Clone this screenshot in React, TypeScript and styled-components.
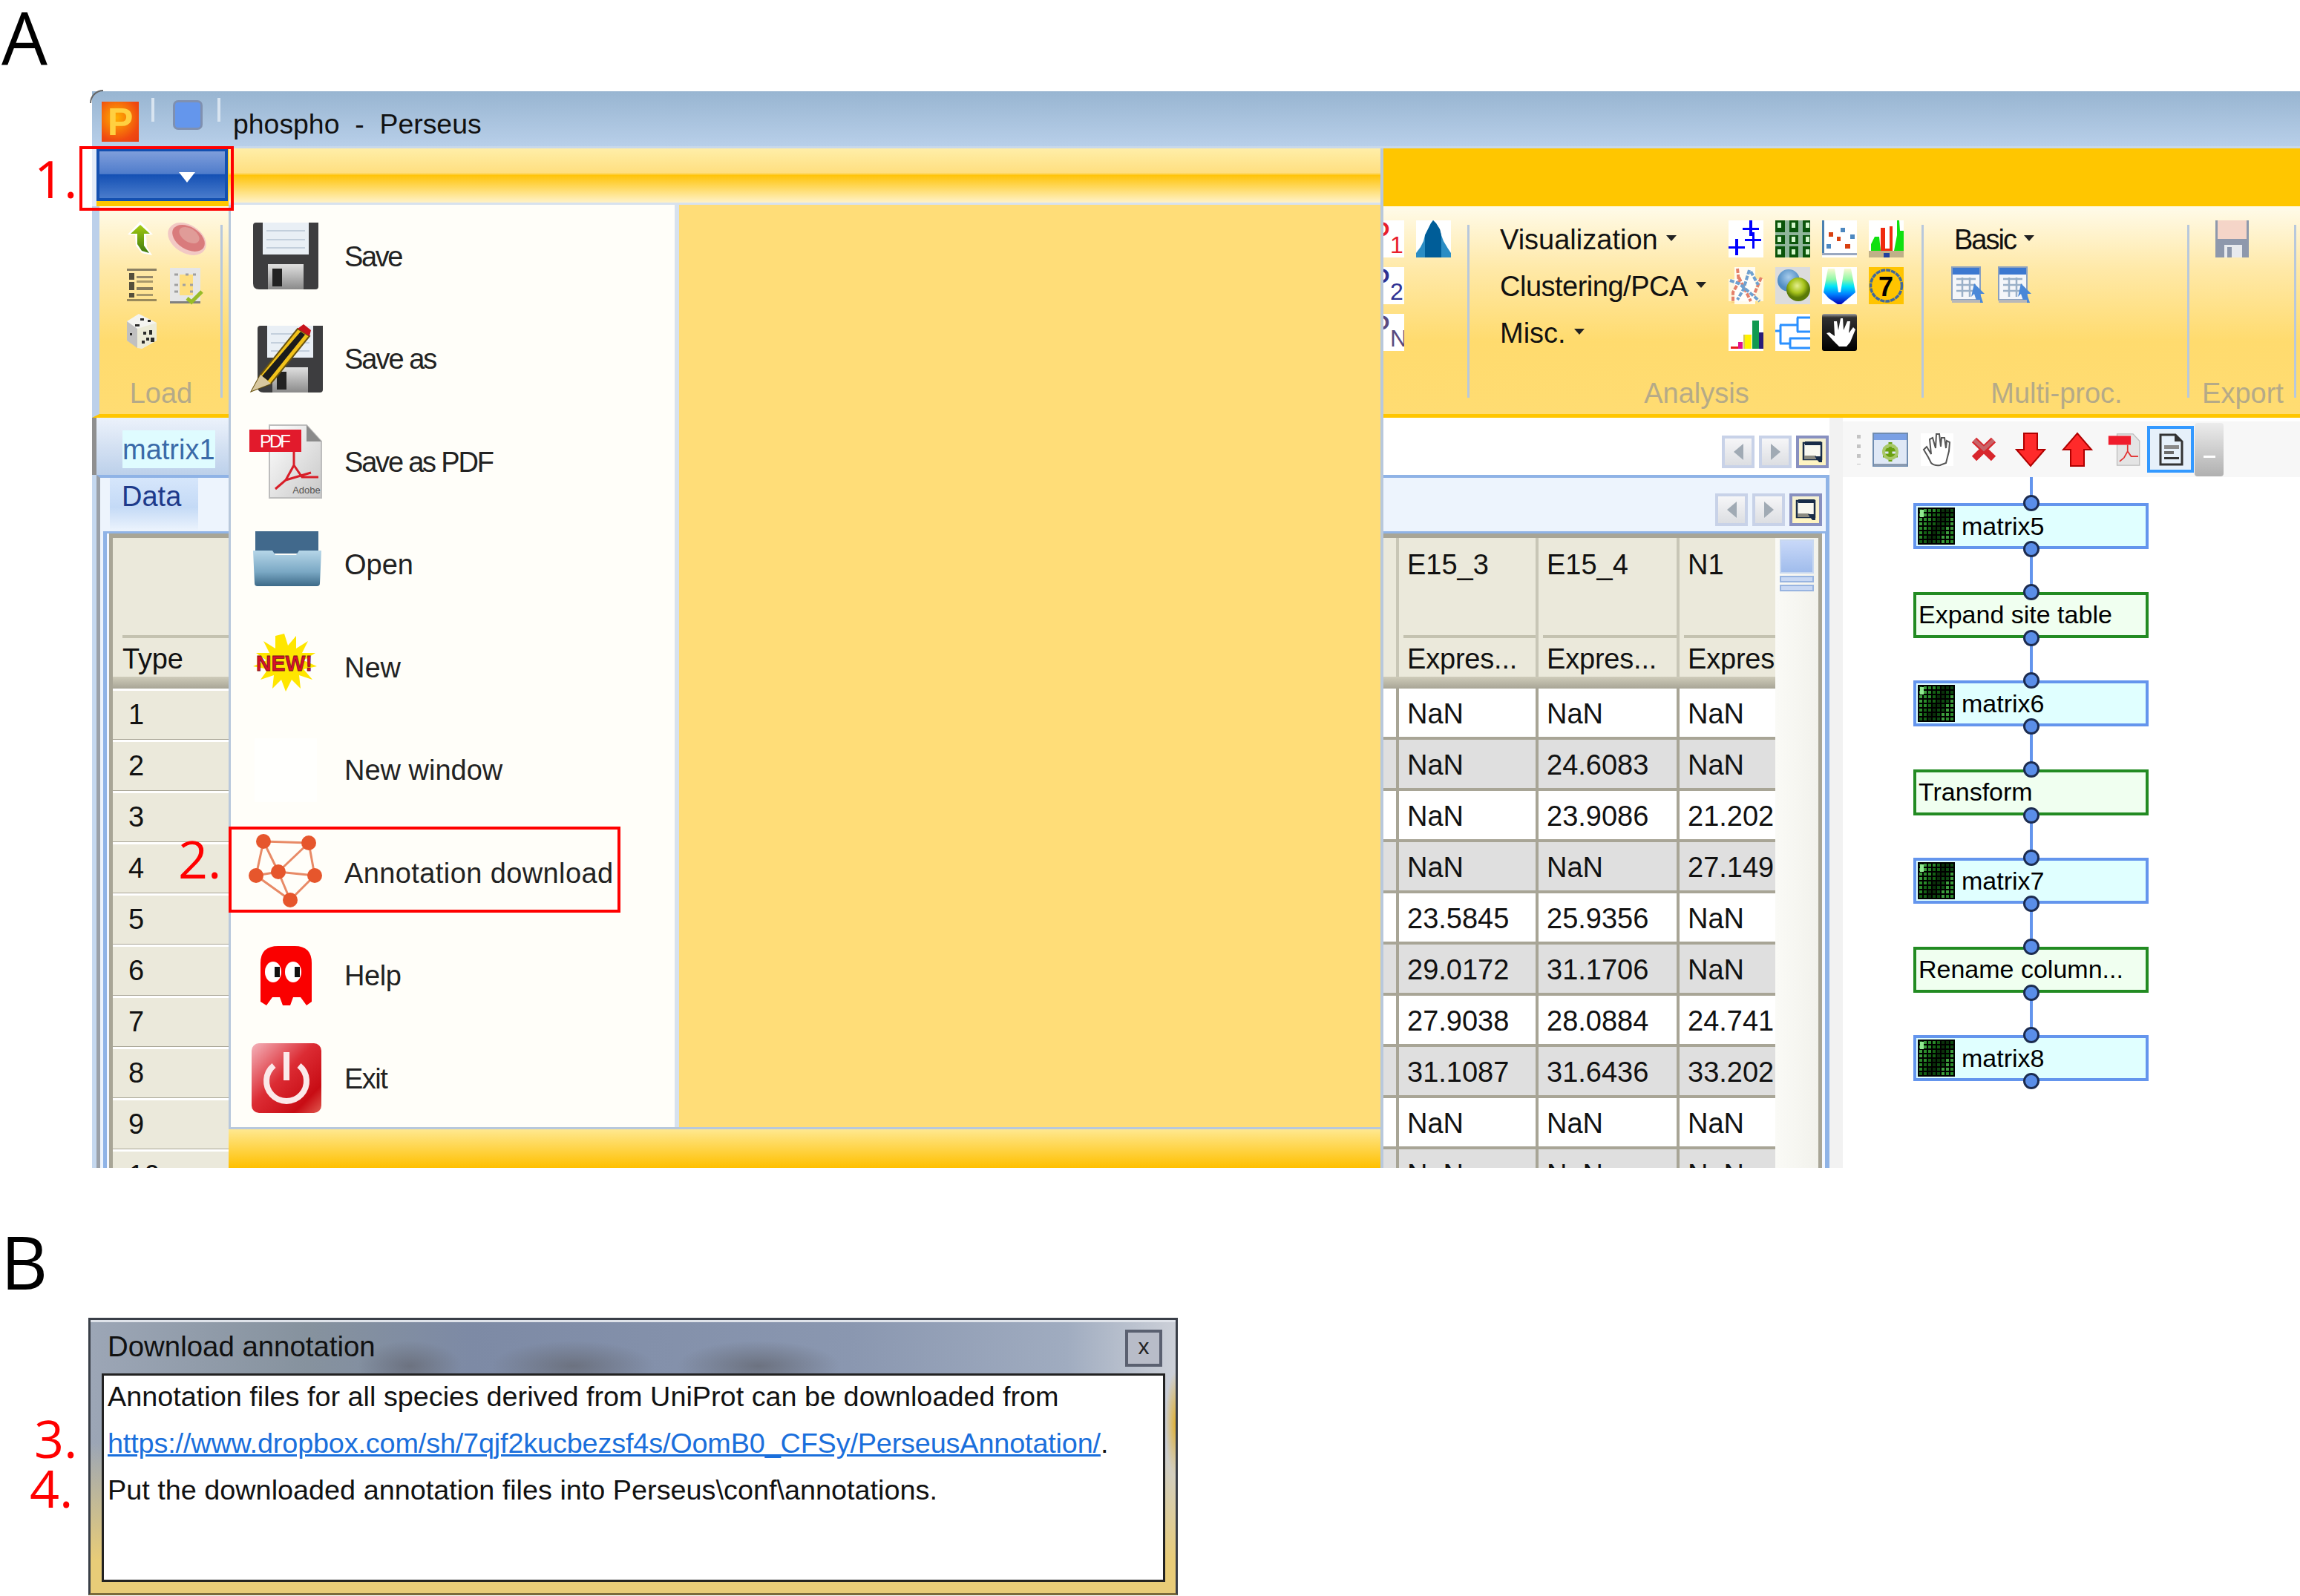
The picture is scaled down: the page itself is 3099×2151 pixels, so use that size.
//-----------------------------------------------------------------------------
// Imports
//-----------------------------------------------------------------------------
import React from 'react'
import styled, { createGlobalStyle } from 'styled-components'

//-----------------------------------------------------------------------------
// Data
//-----------------------------------------------------------------------------
const tableRows = [
  ['1', 'NaN', 'NaN', 'NaN'],
  ['2', 'NaN', '24.6083', 'NaN'],
  ['3', 'NaN', '23.9086', '21.202'],
  ['4', 'NaN', 'NaN', '27.149'],
  ['5', '23.5845', '25.9356', 'NaN'],
  ['6', '29.0172', '31.1706', 'NaN'],
  ['7', '27.9038', '28.0884', '24.741'],
  ['8', '31.1087', '31.6436', '33.202'],
  ['9', 'NaN', 'NaN', 'NaN'],
  ['10', 'NaN', 'NaN', 'NaN']
]

const workflow = [
  { label: 'matrix5', isMatrix: true },
  { label: 'Expand site table', isMatrix: false },
  { label: 'matrix6', isMatrix: true },
  { label: 'Transform', isMatrix: false },
  { label: 'matrix7', isMatrix: true },
  { label: 'Rename column...', isMatrix: false },
  { label: 'matrix8', isMatrix: true }
]

//-----------------------------------------------------------------------------
// Icons
//-----------------------------------------------------------------------------
const Ico = styled.svg<{ $w: number, $h: number }>`
  width: ${p => p.$w}px;
  height: ${p => p.$h}px;
  flex: none;
  display: block;
  overflow: visible;
`

const ClippedIco = styled(Ico)`
  overflow: hidden;
`

const BaseIcon = ({ w = 47, h = 50, children }: { w?: number, h?: number, children: React.ReactNode }) => (
  <Ico $w={w} $h={h} viewBox={`0 0 ${w} ${h}`}>{children}</Ico>
)

const MenuIcon = ({ children }: { children: React.ReactNode }) => (
  <Ico $w={88} $h={90} viewBox="0 0 88 90">{children}</Ico>
)

const FloppyShape = ({ id, dx = 0 }: { id: string, dx?: number }) => (
  <g transform={`translate(${dx} 0)`}>
    <defs>
      <linearGradient id={id} x1="0" y1="0" x2="0" y2="1">
        <stop offset="0" stopColor="#e0e0e0" />
        <stop offset="1" stopColor="#8a8a8a" />
      </linearGradient>
    </defs>
    <path d="M0 4 Q0 0 4 0 H88 V86 Q88 90 84 90 H8 Q0 90 0 82 Z" fill="#3d3d3f" />
    <rect x="13" y="0" width="62" height="43" fill="#e9eff5" />
    <rect x="18" y="10" width="52" height="2" fill="#c3cfdc" />
    <rect x="18" y="22" width="52" height="2" fill="#c3cfdc" />
    <rect x="18" y="33" width="52" height="2" fill="#c3cfdc" />
    <rect x="20" y="56" width="48" height="34" fill={`url(#${id})`} />
    <rect x="26" y="62" width="13" height="24" fill="#222" />
  </g>
)

const SaveIcon = () => <MenuIcon><FloppyShape id="saveGrad" /></MenuIcon>

const SaveAsIcon = () => (
  <MenuIcon>
    <FloppyShape id="saveAsGrad" dx={6} />
    <path d="M-2 88 L10 66 L60 4 L76 14 L24 78 Z" fill="#f2c21a" stroke="#6a5410" strokeWidth="2" />
    <path d="M12 68 L64 8 L70 12 L20 74 Z" fill="#1c1c1c" />
    <path d="M60 4 L68 -2 L78 6 L76 14 Z" fill="#c8141c" />
    <path d="M-2 88 L10 66 L24 78 Z" fill="#d8c8a0" />
  </MenuIcon>
)

const PdfIcon = () => (
  <MenuIcon>
    <defs>
      <linearGradient id="pdfPage" x1="0" y1="0" x2="1" y2="1">
        <stop offset="0" stopColor="#ffffff" />
        <stop offset="1" stopColor="#c8c8c8" />
      </linearGradient>
    </defs>
    <path d="M22 -4 H72 L92 18 V94 H22 Z" fill="url(#pdfPage)" stroke="#bdbdbd" strokeWidth="2" />
    <path d="M72 -4 V18 H92 Z" fill="#8a8a8a" />
    <rect x="-5" y="2" width="70" height="30" fill="#e21a2c" />
    <text x="30" y="26" fontFamily="Liberation Sans, sans-serif" fontSize="24" fill="#fff" textAnchor="middle" textLength="42">PDF</text>
    <path d="M55 32 V50 L44 70 L30 82 M55 50 L66 66 L88 66 M44 70 L78 60" fill="none" stroke="#d81e28" strokeWidth="3" />
    <text x="72" y="88" fontFamily="Liberation Sans, sans-serif" fontSize="13" fill="#555" textAnchor="middle">Adobe</text>
  </MenuIcon>
)

const OpenIcon = () => (
  <MenuIcon>
    <defs>
      <linearGradient id="openGrad" x1="0" y1="0" x2="0" y2="1">
        <stop offset="0" stopColor="#b6d6e8" />
        <stop offset="0.6" stopColor="#7aa8c4" />
        <stop offset="1" stopColor="#3d6a88" />
      </linearGradient>
    </defs>
    <rect x="3" y="0" width="85" height="30" fill="#41698c" />
    <path d="M0 26 H26 L30 32 H58 L62 26 H92 L90 70 Q90 74 86 74 H6 Q2 74 2 70 Z" fill="url(#openGrad)" />
  </MenuIcon>
)

const NewIcon = () => (
  <MenuIcon>
    <path d="M42 0 L47 16 L58 3 L58 20 L74 10 L66 26 L84 26 L68 36 L86 44 L68 48 L80 62 L62 56 L64 74 L52 62 L44 78 L38 62 L26 74 L28 56 L10 62 L20 48 L0 44 L18 36 L4 26 L22 26 L14 10 L30 20 L30 3 Z" fill="#ffe600" />
    <text x="42" y="50" fontFamily="Liberation Sans, sans-serif" fontWeight="700" fontSize="30" fill="#d8102a" stroke="#7a1020" strokeWidth="0.8" textAnchor="middle" textLength="76" lengthAdjust="spacingAndGlyphs">NEW!</text>
  </MenuIcon>
)

const BlankIcon = () => <MenuIcon><rect x="2" y="2" width="84" height="86" fill="#fffffd" /></MenuIcon>

const networkNodes = [[14, 3], [75, 5], [4, 49], [34, 44], [83, 49], [50, 82]]
const networkEdges = [[0, 1], [0, 2], [0, 3], [1, 3], [1, 4], [2, 3], [3, 4], [2, 5], [3, 5], [4, 5]]

const NetworkIcon = () => (
  <MenuIcon>
    {networkEdges.map(([a, b]) => (
      <line
        key={`${a}-${b}`}
        x1={networkNodes[a][0]}
        y1={networkNodes[a][1]}
        x2={networkNodes[b][0]}
        y2={networkNodes[b][1]}
        stroke="#e88a66"
        strokeWidth="3" />
    ))}
    {networkNodes.map(([x, y]) => <circle key={`${x}-${y}`} cx={x} cy={y} r="10" fill="#e6562c" />)}
  </MenuIcon>
)

const GhostIcon = () => (
  <MenuIcon>
    <path d="M10 80 V28 Q10 5 34 5 H56 Q79 5 79 28 V80 L72 85 L64 74 L54 74 L50 85 L40 85 L36 74 L26 74 L18 85 Z" fill="#fa0000" />
    <ellipse cx="27" cy="40" rx="11" ry="14" fill="#fff" />
    <ellipse cx="54" cy="40" rx="11" ry="14" fill="#fff" />
    <rect x="29" y="33" width="7" height="14" fill="#111" />
    <rect x="56" y="33" width="7" height="14" fill="#111" />
  </MenuIcon>
)

const ExitIcon = () => (
  <MenuIcon>
    <defs>
      <linearGradient id="exitGrad" x1="0" y1="0" x2="1" y2="1">
        <stop offset="0" stopColor="#f4b4bc" />
        <stop offset="0.45" stopColor="#dc2c34" />
        <stop offset="0.8" stopColor="#c80c14" />
        <stop offset="1" stopColor="#e05a50" />
      </linearGradient>
    </defs>
    <rect x="-2" y="-2" width="94" height="94" rx="10" fill="url(#exitGrad)" />
    <path d="M28 28 A27 27 0 1 0 62 28" fill="none" stroke="#fbe9ea" strokeWidth="8" />
    <rect x="41" y="10" width="8" height="38" fill="#fbe9ea" />
  </MenuIcon>
)

const ArrowUpGreen = () => (
  <BaseIcon w={36} h={48}>
    <defs>
      <linearGradient id="greenArrow" x1="0" y1="0" x2="0" y2="1">
        <stop offset="0" stopColor="#a4cc10" />
        <stop offset="1" stopColor="#3e7a10" />
      </linearGradient>
    </defs>
    <path d="M18 1 L35 19 L26 20 L27 36 L34 47 L20 44 L12 34 L11 20 L1 19 Z" fill="#fff" />
    <path d="M18 6 L31 18 L23 18 L23 34 L30 44 L20 41 L14 32 L14 18 L5 18 Z" fill="url(#greenArrow)" />
  </BaseIcon>
)

const RedBlob = () => (
  <BaseIcon>
    <ellipse cx="24" cy="25" rx="28" ry="19" transform="rotate(32 24 25)" fill="#f2c8c4" />
    <ellipse cx="26" cy="24" rx="24" ry="15" transform="rotate(32 26 24)" fill="#d97b7c" />
    <ellipse cx="27" cy="20" rx="15" ry="9" transform="rotate(32 27 20)" fill="#e09c98" />
  </BaseIcon>
)

const ListIcon = () => (
  <BaseIcon w={40} h={48}>
    <rect x="0" y="2" width="40" height="3" fill="#8a8064" />
    <rect x="0" y="43" width="40" height="3" fill="#9a8a5c" />
    <rect x="3" y="8" width="7" height="9" fill="#554f3c" />
    <rect x="3" y="20" width="7" height="11" fill="#554f3c" />
    <rect x="3" y="35" width="7" height="6" fill="#554f3c" />
    <rect x="13" y="12" width="22" height="3" fill="#96896a" />
    <rect x="13" y="18" width="22" height="3" fill="#a8986a" />
    <rect x="13" y="27" width="22" height="4" fill="#857a5e" />
    <rect x="13" y="36" width="22" height="3" fill="#a8986a" />
  </BaseIcon>
)

const CheckDocIcon = () => (
  <BaseIcon w={45} h={50}>
    <rect x="1" y="1" width="41" height="47" fill="#e6e6e6" />
    <rect x="1" y="46" width="41" height="3" fill="#808080" />
    <path d="M14 10 H32 V38 H14 Z" fill="#ffdf80" />
    <path d="M7 10 H12 M22 10 H26 M32 10 H36 M7 24 H12 M18 24 H22 M28 24 H32 M7 33 H12 M28 33 H32" stroke="#a0a0a0" strokeWidth="3" />
    <path d="M24 42 L30 47 L44 33" fill="none" stroke="#98bc28" strokeWidth="5" />
  </BaseIcon>
)

const DiceIcon = () => (
  <BaseIcon w={40} h={48}>
    <path d="M16 0 L40 12 V36 L20 47 L0 36 V10 Z" fill="#f4f4f0" />
    <path d="M0 10 L14 20 V46 L0 36 Z" fill="#c0c0c0" />
    <path d="M14 20 L40 12 V36 L20 47 L14 46 Z" fill="#ecebd8" />
    <path d="M18 6 h5 v3 h-5 Z M11 14 h6 v3 h-6 Z M28 8 h4 v3 h-4 Z M22 24 h4 v4 h-4 Z M30 22 h4 v6 h-4 Z M26 32 h4 v4 h-4 Z M32 32 h5 v6 h-5 Z M20 36 h4 v4 h-4 Z M4 26 h3 v3 h-3 Z" fill="#2a2a2a" />
  </BaseIcon>
)

const ClippedLetterIcon = ({ sub, color }: { sub: string, color: string }) => (
  <ClippedIco $w={28} $h={50} viewBox="0 0 28 50">
    <rect width="28" height="50" fill="#fff" />
    <text x="-21" y="34" fontFamily="Liberation Sans, sans-serif" fontSize="46" fill={color}>P</text>
    <text x="9" y="44" fontFamily="Liberation Sans, sans-serif" fontSize="32" fill={color}>{sub}</text>
  </ClippedIco>
)

const PeakIcon = () => (
  <BaseIcon>
    <rect width="47" height="50" fill="#fff" />
    <path d="M0 50 V44 L6 36 L10 28 L12 20 L16 12 L20 4 L23 0 L27 4 L32 12 L34 20 L37 28 L43 38 L47 44 V50 Z" fill="#2b8dc4" />
    <path d="M12 50 V20 L16 12 L20 4 L23 0 L27 4 L32 12 L34 20 V50 Z" fill="#005d98" />
  </BaseIcon>
)

const PlusIcon = () => (
  <BaseIcon>
    <rect width="47" height="50" fill="#fff" />
    <path d="M28 0 h4 v21 h-4 Z M19 10 h22 v3 h-22 Z M32 16 h3 v22 h-3 Z M22 25 h22 v3 h-22 Z M9 25 h4 v22 h-4 Z M0 35 h22 v3 h-22 Z" fill="#0000ff" />
  </BaseIcon>
)

const GridIcon = () => (
  <BaseIcon>
    <rect width="47" height="50" fill="#0b540b" />
    {[3, 22, 41].map(x => [3, 22, 39].map(y => (
      <rect key={`${x}-${y}`} x={x} y={y} width="5" height="7" fill="#d4f6cc" />
    )))}
    <rect x="13" width="6" height="50" fill="#8fb59a" />
    <rect x="31" width="6" height="50" fill="#8fb59a" />
    <rect y="16" width="47" height="4" fill="#8fb59a" />
    <rect y="32" width="47" height="3" fill="#8fb59a" />
  </BaseIcon>
)

const ScatterIcon = () => (
  <BaseIcon>
    <rect width="47" height="50" fill="#fff" />
    <rect width="3" height="47" fill="#4a80b0" />
    <rect y="44" width="47" height="3" fill="#9aa8c0" />
    <rect x="25" y="10" width="6" height="6" fill="#4d88c0" />
    <rect x="9" y="16" width="6" height="6" fill="#d84010" />
    <rect x="20" y="22" width="5" height="6" fill="#d84010" />
    <rect x="38" y="19" width="6" height="6" fill="#4d88c0" />
    <rect x="6" y="32" width="6" height="6" fill="#4d88c0" />
    <rect x="31" y="32" width="7" height="6" fill="#d84010" />
  </BaseIcon>
)

const HistogramIcon = () => (
  <BaseIcon>
    <rect width="47" height="50" fill="#fff" />
    <path d="M3 41 V32 L8 22 H14 L16 41 Z M34 41 L38 20 L38 0 H41 L42 14 H47 V41 Z" fill="#10e010" />
    <path d="M16 43 V10 H22 V38 H28 V8 H32 V43 Z" fill="#f02a10" />
    <path d="M0 41 H47 V50 H0 Z" fill="#c0b088" />
    <rect x="20" y="44" width="8" height="6" fill="#2040a0" />
  </BaseIcon>
)

const ZigzagIcon = () => (
  <BaseIcon>
    <rect x="8" width="28" height="50" fill="#fff" opacity="0.85" />
    <rect y="16" width="47" height="30" fill="#fff" opacity="0.7" />
    <path d="M12 2 L14 20 L6 34 L6 48 M14 14 L30 46 M44 14 L34 38" fill="none" stroke="#e4806a" strokeWidth="4" strokeDasharray="6 2" />
    <path d="M28 4 L20 30 L12 44 M2 18 L14 22 L42 46 M30 6 L40 24" fill="none" stroke="#6ea0d0" strokeWidth="4" strokeDasharray="6 2" />
  </BaseIcon>
)

const BubblesIcon = () => (
  <BaseIcon>
    <defs>
      <radialGradient id="bubbleBlue" cx="0.5" cy="0.35">
        <stop offset="0" stopColor="#a8cdec" />
        <stop offset="1" stopColor="#4f8cc4" />
      </radialGradient>
      <radialGradient id="bubbleGreen" cx="0.45" cy="0.35">
        <stop offset="0" stopColor="#e4ee90" />
        <stop offset="0.6" stopColor="#a8c41c" />
        <stop offset="1" stopColor="#5a7a08" />
      </radialGradient>
    </defs>
    <rect width="47" height="50" fill="#dcdcdc" />
    <circle cx="18" cy="18" r="15" fill="url(#bubbleBlue)" />
    <circle cx="31" cy="30" r="16" fill="url(#bubbleGreen)" />
  </BaseIcon>
)

const FunnelIcon = () => (
  <BaseIcon>
    <defs>
      <linearGradient id="funnelGrad" x1="0" y1="0" x2="0" y2="1">
        <stop offset="0" stopColor="#fafad0" />
        <stop offset="0.3" stopColor="#90f8a8" />
        <stop offset="0.5" stopColor="#00e4f8" />
        <stop offset="0.72" stopColor="#0080ff" />
        <stop offset="1" stopColor="#0000b8" />
      </linearGradient>
    </defs>
    <rect width="47" height="50" fill="#fff" />
    <path d="M2 34 L8 2 L17 2 L22 34 L25 34 L30 2 L39 2 L45 34 L38 40 L26 50 L21 50 L9 42 Z" fill="url(#funnelGrad)" />
  </BaseIcon>
)

const SevenIcon = () => (
  <BaseIcon>
    <rect width="47" height="50" fill="#ffc400" />
    <circle cx="23.5" cy="25" r="21" fill="none" stroke="#41689c" strokeWidth="3.5" strokeDasharray="6 1" />
    <text x="23" y="39" fontFamily="Liberation Sans, sans-serif" fontWeight="700" fontSize="36" fill="#000" textAnchor="middle">7</text>
  </BaseIcon>
)

const BarsIcon = () => (
  <BaseIcon>
    <rect width="47" height="50" fill="#fff" />
    <rect x="3" y="44" width="12" height="3" fill="#e81c1c" />
    <rect x="13" y="38" width="6" height="9" fill="#e0108a" />
    <rect x="20" y="28" width="3" height="19" fill="#d8c850" />
    <rect x="22" y="28" width="9" height="19" fill="#fff200" />
    <rect x="32" y="9" width="9" height="38" fill="#109a50" />
    <rect x="41" y="25" width="6" height="22" fill="#2a1a78" />
  </BaseIcon>
)

const TreeIcon = () => (
  <BaseIcon>
    <rect width="47" height="50" fill="#fff" />
    <path d="M0 23 H7 M7 15 V40 M6 15 H30 M30 5 V24 M29 5 H47 M29 24 H47 M6 40 H20 M20 33 V46 M19 33 H47 M19 46 H47" fill="none" stroke="#2a90ff" strokeWidth="3" />
  </BaseIcon>
)

const BlackHandIcon = () => (
  <BaseIcon>
    <defs>
      <linearGradient id="handBg" x1="0" y1="0" x2="0" y2="1">
        <stop offset="0" stopColor="#a0a0a0" />
        <stop offset="0.1" stopColor="#303030" />
        <stop offset="1" stopColor="#000" />
      </linearGradient>
    </defs>
    <rect width="47" height="50" rx="3" fill="url(#handBg)" />
    <path d="M6 26 L10 25 L17 30 L16 10 L20 10 L22 22 L25 6 L28 6 L29 22 L34 10 L38 10 L36 26 L42 18 L45 21 L38 38 L33 44 L23 44 L15 36 Z" fill="#fff" />
  </BaseIcon>
)

const TableDocIcon = () => (
  <BaseIcon w={45} h={50}>
    <rect x="0" y="0" width="38" height="44" fill="#f4f6fa" stroke="#8aa0c0" strokeWidth="2" />
    <rect x="1" y="1" width="36" height="9" fill="#3c78d0" />
    <path d="M6 16 H32 M6 24 H32 M6 32 H32 M14 14 V40 M24 14 V40" stroke="#9ab0c8" strokeWidth="2.5" />
    <path d="M30 22 L44 36 L38 36 L42 48 L34 48 L30 36 L26 40 Z" fill="#4a88d8" />
    <rect x="0" y="44" width="38" height="4" fill="#b8b8b8" />
  </BaseIcon>
)

const PaleFloppyIcon = () => (
  <BaseIcon w={45} h={50}>
    <rect width="45" height="50" fill="#8e98ac" />
    <rect x="3" width="39" height="25" fill="#f5d5c8" />
    <rect x="12" y="33" width="24" height="17" fill="#e8eaee" />
    <rect x="16" y="36" width="6" height="14" fill="#8e98ac" />
  </BaseIcon>
)

const RefreshDocIcon = () => (
  <BaseIcon w={46} h={44}>
    <rect width="46" height="44" fill="#dfe8f6" stroke="#6f8cb0" strokeWidth="2" />
    <rect x="1" y="1" width="44" height="8" fill="#7aa0e4" />
    <path d="M23 12 V38 M13 22 H33 M13 30 H33" stroke="#6aa010" strokeWidth="5" />
    <circle cx="23" cy="25" r="9" fill="none" stroke="#a8c868" strokeWidth="4" />
    <rect x="1" y="41" width="44" height="3" fill="#8a9ab0" />
  </BaseIcon>
)

const OutlineHandIcon = () => (
  <BaseIcon w={44} h={44}>
    <rect width="44" height="44" fill="#fff" />
    <path d="M4 22 L10 32 L14 40 Q18 44 26 43 L34 40 L38 24 L39 12 L35 10 L34 20 L32 6 L28 6 L27 18 L25 1 L21 1 L20 20 L16 6 L12 8 L14 28 L8 18 Z" fill="#fff" stroke="#555" strokeWidth="2" />
  </BaseIcon>
)

const RedCrossIcon = () => (
  <BaseIcon w={32} h={31}>
    <path d="M3 3 L29 28 M29 3 L3 28" stroke="#d8262c" strokeWidth="9" />
    <path d="M3 3 L16 15 L29 3" fill="none" stroke="#c86468" strokeWidth="5" />
  </BaseIcon>
)

const RedArrowIcon = ({ up }: { up?: boolean }) => (
  <BaseIcon w={38} h={44}>
    <g transform={up ? 'rotate(180 19 22)' : undefined}>
      <path d="M10 0 H28 V22 H38 L19 44 L0 22 H10 Z" fill="#ff2a2a" stroke="#b00000" strokeWidth="2" />
    </g>
  </BaseIcon>
)

const SmallPdfIcon = () => (
  <Ico $w={44} $h={44} viewBox="-6 -6 100 102">
    <path d="M22 -4 H72 L92 18 V94 H22 Z" fill="#e4e4e4" stroke="#bdbdbd" strokeWidth="3" />
    <rect x="-5" y="2" width="70" height="28" fill="#f01c2c" />
    <path d="M55 30 V50 L44 70 L30 82 M55 50 L66 66 L88 66" fill="none" stroke="#e23030" strokeWidth="4" />
  </Ico>
)

const PageIcon = () => (
  <BaseIcon w={32} h={44}>
    <path d="M2 2 H22 L31 11 V42 H2 Z" fill="#e6f0fa" stroke="#333" strokeWidth="3" />
    <path d="M21 2 L31 11 H21 Z" fill="#333" />
    <rect x="7" y="16" width="20" height="5" fill="#8a8a8a" />
    <rect x="7" y="24" width="13" height="4" fill="#6a6a6a" />
    <rect x="7" y="32" width="20" height="3" fill="#333" />
  </BaseIcon>
)

const WindowIcon = () => (
  <BaseIcon w={26} h={28}>
    <rect x="1" y="2" width="24" height="22" fill="#f8f8f0" stroke="#182c48" strokeWidth="2.5" />
    <rect x="3" y="0" width="22" height="5" fill="#182c48" />
    <rect x="2" y="19" width="16" height="5" fill="#8a8a80" />
    <path d="M16 20 H26 V28 H22 Z" fill="#182c48" />
  </BaseIcon>
)

const matrixCells = Array.from({ length: 64 }, (_, i) => ({
  x: (i % 8) * 6 + 2,
  y: Math.floor(i / 8) * 6 + 2,
  shade: ['#0c4a10', '#2a8a2a', '#0a300a', '#3c9c3c', '#146014'][(i * 7 + (i % 3)) % 5]
}))

const MatrixIcon = () => (
  <BaseIcon w={50} h={50}>
    <rect width="50" height="50" fill="#000" />
    {matrixCells.map(c => <rect key={`${c.x}-${c.y}`} x={c.x} y={c.y} width="4" height="4" fill={c.shade} />)}
    <rect x="3" y="3" width="5" height="10" fill="#90e890" />
  </BaseIcon>
)

//-----------------------------------------------------------------------------
// Component
//-----------------------------------------------------------------------------
const menuItems: Array<{ label: string, icon: React.ReactNode, spacing: number }> = [
  { label: 'Save', icon: <SaveIcon />, spacing: -2.4 },
  { label: 'Save as', icon: <SaveAsIcon />, spacing: -2 },
  { label: 'Save as PDF', icon: <PdfIcon />, spacing: -2.2 },
  { label: 'Open', icon: <OpenIcon />, spacing: 0 },
  { label: 'New', icon: <NewIcon />, spacing: 0 },
  { label: 'New window', icon: <BlankIcon />, spacing: 0 },
  { label: 'Annotation download', icon: <NetworkIcon />, spacing: 0.4 },
  { label: 'Help', icon: <GhostIcon />, spacing: -0.4 },
  { label: 'Exit', icon: <ExitIcon />, spacing: -1.5 }
]

const toolIcons = [
  <RefreshDocIcon />,
  <OutlineHandIcon />,
  <RedCrossIcon />,
  <RedArrowIcon />,
  <RedArrowIcon up />,
  <SmallPdfIcon />,
  <ToolActiveIcon />
]

function ToolActiveIcon() {
  return <ToolActive><PageIcon /></ToolActive>
}

const NavButtons = () => (
  <NavGroup>
    <NavButton><NavArrow $dir="left" /></NavButton>
    <NavButton><NavArrow $dir="right" /></NavButton>
    <NavButton $active><WindowIcon /></NavButton>
  </NavGroup>
)

const App = () => (
  <Page>
    <GlobalStyle />
    <LetterA>A</LetterA>
    <Window>
      <TitleBar>
        <AppLogo>P</AppLogo>
        <QuickSep />
        <QuickSquare />
        <QuickSep />
        <TitleText>{'phospho  -  Perseus'}</TitleText>
      </TitleBar>
      <TabBand>
        <OrbButton><OrbArrow /></OrbButton>
      </TabBand>
      <Ribbon>
        <RibbonGroup $width={166}>
          <LoadGrid>
            <ArrowUpGreen />
            <RedBlob />
            <ListIcon />
            <CheckDocIcon />
            <DiceIcon />
          </LoadGrid>
          <GroupLabel>Load</GroupLabel>
        </RibbonGroup>
        <RibbonGroup $width={1680}>
          <HiddenContent>
            <StripColumn>
              <ClippedLetterIcon sub="1" color="#e8202c" />
              <ClippedLetterIcon sub="2" color="#2e3192" />
              <ClippedLetterIcon sub="N" color="#5a4a80" />
            </StripColumn>
            <PeakIcon />
          </HiddenContent>
        </RibbonGroup>
        <RibbonGroup $width={612}>
          <AnalysisContent>
            <DropList>
              <DropItem>Visualization<DropArrow /></DropItem>
              <DropItem $spacing={-0.5}>Clustering/PCA<DropArrow /></DropItem>
              <DropItem>Misc.<DropArrow /></DropItem>
            </DropList>
            <IconGrid>
              <PlusIcon />
              <GridIcon />
              <ScatterIcon />
              <HistogramIcon />
              <ZigzagIcon />
              <BubblesIcon />
              <FunnelIcon />
              <SevenIcon />
              <BarsIcon />
              <TreeIcon />
              <BlackHandIcon />
            </IconGrid>
          </AnalysisContent>
          <GroupLabel>Analysis</GroupLabel>
        </RibbonGroup>
        <RibbonGroup $width={358}>
          <MultiContent>
            <DropItem $indent $spacing={-2}>Basic<DropArrow /></DropItem>
            <MultiIcons>
              <TableDocIcon />
              <TableDocIcon />
            </MultiIcons>
          </MultiContent>
          <GroupLabel>Multi-proc.</GroupLabel>
        </RibbonGroup>
        <RibbonGroup $width={144}>
          <ExportContent><PaleFloppyIcon /></ExportContent>
          <GroupLabel>Export</GroupLabel>
        </RibbonGroup>
      </Ribbon>
      <Main>
        <LeftPane>
          <MatrixTabs>
            <MatrixStrip><MatrixTab>matrix1</MatrixTab></MatrixStrip>
            <NavButtons />
          </MatrixTabs>
          <DataFrame>
            <DataTabs>
              <DataTab>Data</DataTab>
              <NavButtons />
            </DataTabs>
            <TableFrame>
              <TableGrid>
                <TableColumns>
                  <TableRow>
                    <HeaderCell><span /><HeaderType $first>Type</HeaderType></HeaderCell>
                    <HeaderGap />
                    <HeaderCell $divider>E15_3<HeaderType>Expres...</HeaderType></HeaderCell>
                    <HeaderCell $divider>E15_4<HeaderType>Expres...</HeaderType></HeaderCell>
                    <HeaderCell $divider>N1<HeaderType>Expres</HeaderType></HeaderCell>
                  </TableRow>
                  <HeaderBase />
                  {tableRows.map((row, index) => (
                    <BodyRow key={row[0]} $alt={index % 2 === 1}>
                      <RowHead>{row[0]}</RowHead>
                      <span />
                      <BodyCell>{row[1]}</BodyCell>
                      <BodyCell>{row[2]}</BodyCell>
                      <BodyCell>{row[3]}</BodyCell>
                    </BodyRow>
                  ))}
                </TableColumns>
                <ScrollColumn>
                  <ScrollThumb />
                  <ScrollGrip />
                  <ScrollGrip />
                </ScrollColumn>
              </TableGrid>
            </TableFrame>
          </DataFrame>
        </LeftPane>
        <RightPane>
          <Toolbar>
            <ToolGrip />
            {toolIcons.map((icon, index) => <ToolSlot key={index}>{icon}</ToolSlot>)}
            <ToolOverflow />
          </Toolbar>
          <Canvas>
            {workflow.map(node => (
              <FlowNode key={node.label} $isMatrix={node.isMatrix}>
                {node.isMatrix && <MatrixIcon />}
                {node.label}
                <Port $side="top" />
                <Port $side="bottom" />
              </FlowNode>
            ))}
          </Canvas>
        </RightPane>
      </Main>
      <AppMenu>
        <MenuHeader />
        <MenuBody>
          <MenuList>
            {menuItems.map(item => (
              <MenuItem key={item.label}>
                {item.icon}
                <MenuLabel $spacing={item.spacing}>{item.label}</MenuLabel>
              </MenuItem>
            ))}
          </MenuList>
          <MenuAside />
        </MenuBody>
        <MenuFooter />
      </AppMenu>
    </Window>
    <LetterB>B</LetterB>
    <Dialog>
      <DialogTitle>
        Download annotation
        <CloseButton>x</CloseButton>
      </DialogTitle>
      <DialogBody>
        <DialogLine>Annotation files for all species derived from UniProt can be downloaded from</DialogLine>
        <DialogLine>
          <DialogLink>https://www.dropbox.com/sh/7qjf2kucbezsf4s/OomB0_CFSy/PerseusAnnotation/</DialogLink>.
        </DialogLine>
        <DialogLine>{'Put the downloaded annotation files into Perseus\\conf\\annotations.'}</DialogLine>
      </DialogBody>
    </Dialog>
    <CornerArc />
    <Highlight $x={107} $y={197} $w={208} $h={87} />
    <Highlight $x={308} $y={1114} $w={528} $h={116} />
    <Callout $x={46} $y={205}>1.</Callout>
    <Callout $x={240} $y={1122}>2.</Callout>
    <Callout $x={46} $y={1903}>3.</Callout>
    <Callout $x={40} $y={1970}>4.</Callout>
  </Page>
)

//-----------------------------------------------------------------------------
// Styled Components
//-----------------------------------------------------------------------------
const GlobalStyle = createGlobalStyle`
  html, body {
    margin: 0;
    padding: 0;
    background: #fff;
  }
  * {
    box-sizing: border-box;
  }
`

const Page = styled.div`
  position: relative;
  width: 3099px;
  height: 2151px;
  overflow: hidden;
  background: #fff;
  color: #111;
  font-family: "Liberation Sans", Arial, sans-serif;
  font-size: 38px;
`

const LetterA = styled.div`
  height: 123px;
  padding-left: 2px;
  font-family: "Open Sans", sans-serif;
  font-size: 98px;
  line-height: 98px;
  color: #000;
`

const LetterB = styled(LetterA)`
  height: 202px;
  padding-top: 77px;
  padding-left: 1px;
`

const CornerArc = styled.div`
  position: absolute;
  left: 121px;
  top: 121px;
  width: 18px;
  height: 18px;
  border-top: 2px solid #666;
  border-left: 2px solid #666;
  border-top-left-radius: 18px;
`

const Window = styled.div`
  position: relative;
  margin-left: 124px;
  width: 2975px;
  height: 1451px;
  display: flex;
  flex-direction: column;
  overflow: hidden;
`

const TitleBar = styled.div`
  height: 74px;
  flex: none;
  display: flex;
  align-items: flex-start;
  padding: 9px 0 0 13px;
  background: linear-gradient(180deg, #98b5d1, #b8cfe9);
`

const AppLogo = styled.div`
  width: 50px;
  height: 54px;
  margin-top: 5px;
  background: radial-gradient(circle at 40% 40%, #ffb000, #f04a10 70%, #e83c10);
  color: #ffd040;
  font-size: 52px;
  font-weight: 700;
  line-height: 54px;
  text-align: center;
`

const QuickSep = styled.div`
  width: 4px;
  height: 32px;
  background: #d8e4f0;
  margin: 0 17px;
`

const QuickSquare = styled.div`
  width: 40px;
  height: 40px;
  margin: 3px 3px 0 8px;
  border: 3px solid #7f90b0;
  border-radius: 7px;
  background: #6496ec;
`

const TitleText = styled.div`
  margin: 13px 0 0 0;
  font-size: 37.4px;
  line-height: 44px;
  white-space: pre;
  color: #111;
`

const TabBand = styled.div`
  height: 81px;
  flex: none;
  background: #ffc600;
  border-left: 6px solid #e4ecf8;
  border-top: 3px solid #c8d8ea;
`

const OrbButton = styled.div`
  width: 177px;
  height: 71px;
  display: flex;
  align-items: center;
  justify-content: center;
  padding-left: 66px;
  border: 4px solid #1450b0;
  background: linear-gradient(180deg, #7f9edb 0, #4f7ccb 48%, #1450b4 50%, #4a7ccc 100%);
`

const OrbArrow = styled.div`
  margin-top: 6px;
  width: 0;
  height: 0;
  border-left: 11px solid transparent;
  border-right: 11px solid transparent;
  border-top: 14px solid #fff;
`

const Ribbon = styled.div`
  height: 285px;
  flex: none;
  display: flex;
  border-left: 10px solid #bcd0ea;
  border-bottom: 5px solid #ffc600;
  background: linear-gradient(180deg, #fffbea 0, #ffe9a8 30%, #ffdb6e 65%, #ffdc72 100%);
`

const RibbonGroup = styled.div<{ $width: number }>`
  position: relative;
  width: ${p => p.$width}px;
  flex: none;
  display: flex;
  flex-direction: column;
  &::after {
    content: '';
    position: absolute;
    right: 0;
    top: 25px;
    bottom: 22px;
    width: 3px;
    background: #b8c8dc;
  }
`

const GroupLabel = styled.div`
  height: 50px;
  margin-bottom: 3px;
  line-height: 50px;
  text-align: center;
  color: #b5aa88;
`

const LoadGrid = styled.div`
  flex: 1;
  display: grid;
  grid-template-columns: 47px 47px;
  grid-auto-rows: 50px;
  gap: 13px 10px;
  align-content: start;
  padding: 19px 0 0 37px;
`

const HiddenContent = styled.div`
  flex: 1;
  display: flex;
  justify-content: flex-end;
  gap: 16px;
  padding: 19px 25px 0 0;
`

const StripColumn = styled.div`
  display: flex;
  flex-direction: column;
  gap: 13px;
`

const AnalysisContent = styled.div`
  flex: 1;
  display: flex;
  padding: 19px 0 0 41px;
`

const DropList = styled.div`
  width: 308px;
`

const DropItem = styled.div<{ $indent?: boolean, $spacing?: number }>`
  height: 63px;
  line-height: 48px;
  padding-bottom: 11px;
  white-space: nowrap;
  display: flex;
  align-items: center;
  margin-left: ${p => p.$indent ? 3 : 0}px;
  letter-spacing: ${p => p.$spacing ?? 0}px;
`

const DropArrow = styled.span`
  display: inline-block;
  margin: 0 0 4px 11px;
  width: 0;
  height: 0;
  border-left: 7px solid transparent;
  border-right: 7px solid transparent;
  border-top: 8px solid #222;
`

const IconGrid = styled.div`
  display: grid;
  grid-template-columns: repeat(4, 47px);
  grid-auto-rows: 50px;
  gap: 13px 16px;
  align-content: start;
`

const MultiContent = styled.div`
  flex: 1;
  padding: 19px 0 0 38px;
`

const MultiIcons = styled.div`
  display: flex;
  gap: 18px;
`

const ExportContent = styled.div`
  flex: 1;
  padding: 19px 0 0 35px;
`

const Main = styled.div`
  flex: 1;
  min-height: 0;
  display: flex;
`

const LeftPane = styled.div`
  width: 2341px;
  flex: none;
  display: flex;
  flex-direction: column;
  min-height: 0;
  background: #c5d8ef;
`

const MatrixTabs = styled.div`
  height: 77px;
  flex: none;
  display: flex;
  justify-content: space-between;
  align-items: flex-start;
  padding: 24px 1px 0 0;
  background: #fff;
`

const MatrixStrip = styled.div`
  width: 186px;
  height: 77px;
  margin-top: -24px;
  padding: 17px 0 0 35px;
  background: linear-gradient(180deg, #ecf2fb, #bcd0ea);
  border-left: 6px solid #8f8f8f;
`

const MatrixTab = styled.div`
  width: 125px;
  height: 51px;
  background: #dffcff;
  color: #3a6aa8;
  line-height: 52px;
`

const NavGroup = styled.div`
  display: flex;
  gap: 6px;
`

const NavButton = styled.div<{ $active?: boolean }>`
  width: 44px;
  height: 44px;
  display: flex;
  align-items: center;
  justify-content: center;
  border: 4px solid ${p => p.$active ? '#8890c0' : '#c8d2e8'};
  background: ${p => p.$active
    ? 'linear-gradient(180deg, #f4f0d4, #fff4c0)'
    : 'linear-gradient(180deg, #f6f6f8, #dcdee2)'};
`

const NavArrow = styled.div<{ $dir: 'left' | 'right' }>`
  width: 0;
  height: 0;
  border-top: 11px solid transparent;
  border-bottom: 11px solid transparent;
  ${p => p.$dir === 'left'
    ? 'border-right: 13px solid #a0aab4;'
    : 'border-left: 13px solid #a0aab4;'}
`

const DataFrame = styled.div`
  flex: 1;
  min-height: 0;
  margin-left: 6px;
  display: flex;
  flex-direction: column;
  border-top: 4px solid #8fb3e6;
  border-left: 5px solid #9aa0a8;
  border-right: 5px solid #8fb3e6;
  background: #edf4fd;
`

const DataTabs = styled.div`
  height: 72px;
  flex: none;
  display: flex;
  justify-content: space-between;
  align-items: flex-end;
  padding: 0 5px 7px 13px;
`

const DataTab = styled.div`
  width: 119px;
  height: 72px;
  margin-bottom: -7px;
  padding-left: 16px;
  background: linear-gradient(180deg, #d6e6fb, #c4daf6 55%, #edf4fd);
  color: #1e3a8a;
  line-height: 50px;
`

const TableFrame = styled.div`
  flex: 1;
  min-height: 0;
  margin-left: 4px;
  padding: 0 4px 0 3px;
  border-top: 3px solid #8fb3e6;
  border-left: 5px solid #8fb3e6;
  border-right: 1px solid #8fb3e6;
  background: #f4f8ff;
`

const TableGrid = styled.div`
  display: flex;
  height: 100%;
  overflow: hidden;
  border-top: 6px solid #a8a596;
  border-left: 5px solid #a8a596;
  border-right: 5px solid #a8a596;
  background: #fff;
`

const TableColumns = styled.div`
  width: 2240px;
  flex: none;
`

const TableRow = styled.div`
  display: grid;
  grid-template-columns: 158px 1571px 188px 190px 133px;
  background: #ebe9db;
`

const HeaderCell = styled.div<{ $divider?: boolean }>`
  height: 187px;
  display: flex;
  flex-direction: column;
  justify-content: space-between;
  padding: 12px 0 0 11px;
  line-height: 48px;
  overflow: hidden;
  white-space: nowrap;
  ${p => p.$divider ? 'border-left: 4px solid #c8c6b6;' : ''}
`

const HeaderGap = styled.div`
  background: #ebe9db;
`

const HeaderType = styled.div<{ $first?: boolean }>`
  height: 56px;
  line-height: 56px;
  margin-left: ${p => p.$first ? 2 : -5}px;
  padding-left: ${p => p.$first ? 0 : 5}px;
  letter-spacing: -0.2px;
  border-top: 4px solid;
  border-image: linear-gradient(180deg, #c4c2b0 50%, #fff 50%) 1;
`

const HeaderBase = styled.div`
  height: 16px;
  background: linear-gradient(180deg, #cfccba, #a8a596);
`

const BodyRow = styled(TableRow)<{ $alt: boolean }>`
  height: 69px;
  background: ${p => p.$alt ? '#dfdfdf' : '#fff'};
  border-bottom: 4px solid #a8a596;
  line-height: 69px;
`

const RowHead = styled.div`
  padding-left: 21px;
  line-height: 65px;
  background: #ebe9db;
  border-top: 3px solid #fff;
`

const BodyCell = styled.div`
  padding-left: 11px;
  border-left: 4px solid #a8a596;
  white-space: nowrap;
  overflow: hidden;
`

const ScrollColumn = styled.div`
  flex: 1;
  display: flex;
  flex-direction: column;
  padding: 2px 6px 0;
  gap: 3px;
  background: linear-gradient(90deg, #fafaf6, #f2f2ec);
`

const ScrollThumb = styled.div`
  height: 46px;
  background: linear-gradient(180deg, #c8d8f8, #a0bcec);
  border: 2px solid #c8d8f0;
`

const ScrollGrip = styled.div`
  height: 9px;
  background: #c8d8f4;
  border: 2px solid #98b4e0;
`

const RightPane = styled.div`
  flex: 1;
  min-width: 0;
  display: flex;
  flex-direction: column;
  border-left: 18px solid #f2f2f2;
  background: #fff;
`

const Toolbar = styled.div`
  height: 75px;
  margin-top: 5px;
  flex: none;
  display: flex;
  align-items: center;
  padding-left: 19px;
  background: #f7f7f7;
`

const ToolGrip = styled.div`
  width: 5px;
  height: 40px;
  margin-right: 8px;
  background: repeating-linear-gradient(180deg, #c4c4c4 0 5px, transparent 5px 13px);
`

const ToolSlot = styled.div`
  width: 63px;
  height: 63px;
  flex: none;
  display: flex;
  align-items: center;
  justify-content: center;
`

const ToolActive = styled.div`
  width: 63px;
  height: 63px;
  display: flex;
  align-items: center;
  justify-content: center;
  border: 4px solid #3399ff;
  background: #e6f0fa;
`

const ToolOverflow = styled.div`
  position: relative;
  width: 39px;
  height: 72px;
  margin-left: 1px;
  background: linear-gradient(180deg, #ececec, #b0b0b0);
  border-radius: 4px;
  &::after {
    content: '';
    position: absolute;
    left: 12px;
    top: 44px;
    width: 16px;
    height: 3px;
    background: #fff;
  }
`

const Canvas = styled.div`
  flex: 1;
  min-height: 0;
  overflow: hidden;
  display: flex;
  flex-direction: column;
  gap: 57.5px;
  padding: 35px 0 0 95px;
`

const FlowNode = styled.div<{ $isMatrix: boolean }>`
  position: relative;
  width: 317px;
  height: 62px;
  flex: none;
  display: flex;
  align-items: center;
  gap: 9px;
  padding-left: ${p => p.$isMatrix ? 2 : 3}px;
  border: 4px solid ${p => p.$isMatrix ? '#6495ed' : '#228b22'};
  background: ${p => p.$isMatrix ? '#e0ffff' : '#f0fff0'};
  font-size: 34px;
  color: #000;
  white-space: nowrap;
  &::before {
    content: '';
    position: absolute;
    left: 153px;
    top: -62px;
    width: 4px;
    height: 58px;
    background: #6495ed;
  }
`

const Port = styled.span<{ $side: 'top' | 'bottom' }>`
  position: absolute;
  left: 144px;
  ${p => p.$side}: -15px;
  width: 22px;
  height: 22px;
  border-radius: 50%;
  background: #5a8ee8;
  border: 3px solid #1c2c50;
  z-index: 1;
`

const AppMenu = styled.div`
  position: absolute;
  left: 184px;
  top: 77px;
  width: 1556px;
  height: 1374px;
  display: flex;
  flex-direction: column;
  border-right: 4px solid #b8c8dc;
`

const MenuHeader = styled.div`
  height: 76px;
  flex: none;
  background: linear-gradient(180deg, #ffeea8 0, #ffdf80 45%, #ffc40a 50%, #ffe590 85%, #fff2c8 100%);
  border-bottom: 3px solid #d8e2ee;
`

const MenuBody = styled.div`
  flex: 1;
  min-height: 0;
  display: flex;
`

const MenuList = styled.div`
  width: 607px;
  flex: none;
  background: #fffef9;
  border-left: 3px solid #b8c8dc;
  border-right: 6px solid #d8e2ee;
`

const MenuItem = styled.div`
  height: 138.5px;
  display: flex;
  align-items: center;
  gap: 35px;
  padding-left: 30px;
  color: #222;
`

const MenuLabel = styled.span<{ $spacing: number }>`
  padding-top: 2px;
  letter-spacing: ${p => p.$spacing}px;
`

const MenuAside = styled.div`
  flex: 1;
  background: #ffdd78;
`

const MenuFooter = styled.div`
  height: 55px;
  flex: none;
  border-top: 3px solid #b8c8dc;
  background: linear-gradient(180deg, #ffe890, #ffc000);
`

const Dialog = styled.div`
  margin-left: 119px;
  width: 1468px;
  height: 374px;
  display: flex;
  flex-direction: column;
  border: 3px solid #3a3f48;
  border-bottom-color: #7a6a3a;
  font-size: 37.8px;
  background:
    linear-gradient(180deg, transparent 45%, #e8cc78 88%),
    radial-gradient(ellipse 14px 70px at 100% 140px, #e0b030, transparent),
    radial-gradient(ellipse 70px 34px at 430px 62px, #6c7280, transparent),
    radial-gradient(ellipse 110px 34px at 650px 62px, #6c7280, transparent),
    radial-gradient(ellipse 110px 34px at 900px 62px, #6c7280, transparent),
    linear-gradient(90deg, #9ca6b6, #86929e 20%, #7d8aa5 35%, #8a97b0 70%, #a0acc0 90%, #ccd0d8);
`

const DialogTitle = styled.div`
  height: 72px;
  flex: none;
  display: flex;
  align-items: center;
  justify-content: space-between;
  padding: 0 18px 0 23px;
  font-size: 38.4px;
  color: #111;
  box-shadow: inset 0 3px 0 #dfe3ea;
`

const CloseButton = styled.div`
  width: 50px;
  height: 50px;
  margin-top: 4px;
  border: 4px solid #5a6070;
  background: #b8bcc8;
  text-align: center;
  font-size: 30px;
  line-height: 38px;
  color: #222;
`

const DialogBody = styled.div`
  margin: 0 14px 0 15px;
  height: 281px;
  flex: none;
  padding: 0 0 0 5px;
  border: 3px solid #222;
  background: #fff;
  color: #111;
  white-space: nowrap;
`

const DialogLine = styled.div`
  height: 63px;
  line-height: 57px;
`

const DialogLink = styled.span`
  color: #1a6fdc;
  text-decoration: underline;
  letter-spacing: -0.15px;
`

const Highlight = styled.div<{ $x: number, $y: number, $w: number, $h: number }>`
  position: absolute;
  left: ${p => p.$x}px;
  top: ${p => p.$y}px;
  width: ${p => p.$w}px;
  height: ${p => p.$h}px;
  border: 4px solid #f00;
`

const Callout = styled.div<{ $x: number, $y: number }>`
  position: absolute;
  left: ${p => p.$x}px;
  top: ${p => p.$y}px;
  font-family: "Open Sans", sans-serif;
  font-size: 70px;
  line-height: 70px;
  color: #f00;
`

export default App
